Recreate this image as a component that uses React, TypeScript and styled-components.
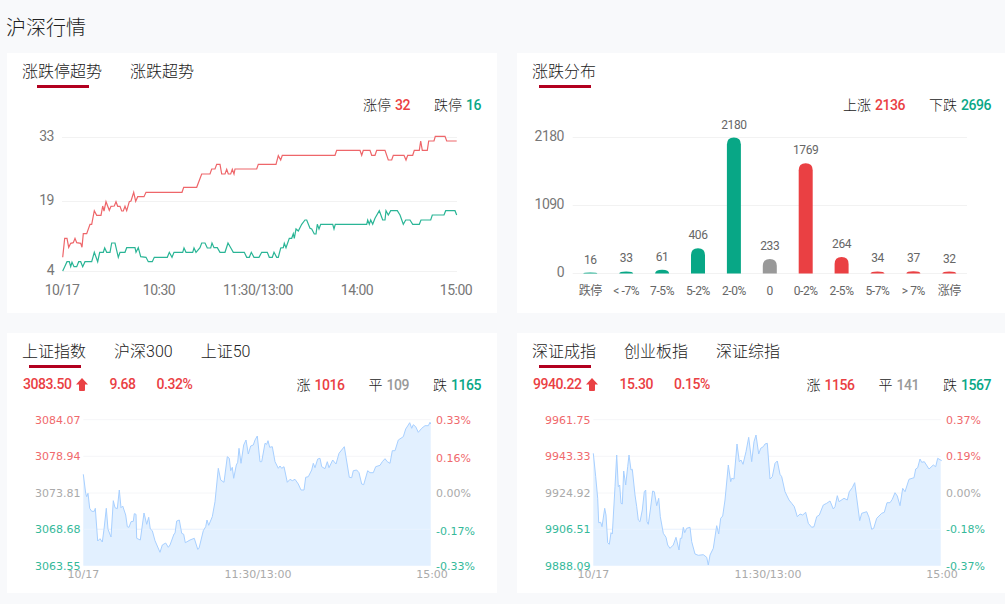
import React from 'react';
import styled, { createGlobalStyle } from 'styled-components';

const RED = '#ea4043';
const GREEN = '#08a786';
const CJK = '"Noto Sans CJK SC", sans-serif';
const NUM = 'Roboto, "Noto Sans CJK SC", sans-serif';

type Tone = 'red' | 'green' | 'grey';
type Pt = number[];

const GlobalStyle = createGlobalStyle`
  html, body {
    margin: 0;
    height: 100%;
    overflow: hidden;
    background: #f8f9fb;
  }
`;

const Page = styled.div`
  width: 1007px;
  height: 604px;
  padding: 0 0 0 7px;
  box-sizing: border-box;
  font-family: ${CJK};
  color: #333;
`;

const Title = styled.h1`
  margin: 0 0 0 -1px;
  height: 53px;
  font-size: 20px;
  font-weight: 300;
  line-height: 54px;
  color: #222;
`;

const Grid = styled.div`
  display: grid;
  grid-template-columns: 490px 490px;
  grid-auto-rows: 260px;
  gap: 20px;
`;

const Card = styled.section`
  background: #fff;
  overflow: hidden;
`;

const Tabs = styled.div`
  display: flex;
  gap: 28px;
  height: 35px;
  padding-left: 15px;
`;

const Tab = styled.div<{ $active?: boolean }>`
  position: relative;
  height: 35px;
  padding-top: 8px;
  box-sizing: border-box;
  font-family: ${NUM};
  font-size: 16px;
  font-weight: 300;
  line-height: 22px;
  color: #222;
  white-space: nowrap;

  &::after {
    content: '';
    display: ${({ $active }) => ($active ? 'block' : 'none')};
    position: absolute;
    left: 50%;
    bottom: 0;
    width: 52px;
    height: 3px;
    margin-left: -25px;
    background: #b2001f;
  }
`;

const InfoRow = styled.div`
  display: flex;
  justify-content: space-between;
  align-items: center;
  height: 18px;
  margin: 7px 0 1px;
  padding: 0 16px 0 16px;
`;

const Group = styled.div<{ $gap: number }>`
  display: flex;
  align-items: center;
  gap: ${({ $gap }) => $gap}px;
`;

const Stat = styled.span`
  font-size: 14px;
  font-weight: 300;
  line-height: 18px;
  color: #222;
  white-space: nowrap;
`;

const toneColor = (t: Tone) => (t === 'red' ? RED : t === 'green' ? GREEN : '#999');

const Num = styled.span<{ $tone: Tone; $inset?: boolean }>`
  margin-left: ${({ $inset }) => ($inset ? '4px' : '0')};
  font-family: ${NUM};
  font-size: 14px;
  font-weight: 500;
  letter-spacing: -0.45px;
  color: ${({ $tone }) => toneColor($tone)};
`;

const PriceWrap = styled.span`
  display: flex;
  align-items: center;
  gap: 5px;
`;

const Chart = styled.svg`
  display: block;
  width: 490px;
  height: 199px;
`;

const AxisText = styled.text`
  font-family: ${NUM};
  font-size: 14px;
  letter-spacing: -0.5px;
  fill: #777;
`;

const BarText = styled.text`
  font-family: ${NUM};
  font-size: 12px;
  letter-spacing: -0.4px;
  fill: #666;
`;

const PriceText = styled.text<{ $tone: string }>`
  font-family: 'DejaVu Sans', sans-serif;
  font-size: 11px;
  fill: ${({ $tone }) => $tone};
`;

const fromZoom = (pts: Pt[], ox: number, oy: number): Pt[] =>
  pts.map(([x, y]) => [ox + x / 3, oy + y / 3]);

const toPath = (pts: Pt[]) => pts.map(p => `${p[0].toFixed(1)},${p[1].toFixed(1)}`).join(' ');

const redLimit = [
  ...fromZoom(
    [[8,397],[14,340],[21,340],[26,367],[32,355],[40,353],[45,340],[50,353],[62,355],[66,367],[70,326],[80,326],[90,298],[95,298],[103,257],[110,271],[123,271],[128,243],[132,258],[138,230],[148,256],[153,244],[163,243],[168,230],[173,244],[180,244],[185,258],[190,258],[195,244],[200,257],[208,230],[213,228],[221,202],[227,229],[233,215],[252,215],[258,202],[366,202],[371,187],[410,187],[425,147],[450,147],[455,132],[465,132],[470,118],[480,118],[485,147],[495,147],[500,133],[505,147],[512,147],[517,133],[522,147],[525,132],[590,132],[595,118]],
    60, 125,
  ),
  ...fromZoom(
    [[0,118],[48,118],[55,92],[62,105],[67,91],[225,91],[230,76],[300,76],[305,91],[310,76],[330,76],[335,91],[345,91],[350,76],[375,76],[385,105],[395,105],[400,91],[432,91],[438,105],[443,91],[458,91],[463,76],[478,76],[482,48],[487,76],[502,76],[506,48],[522,48],[526,34],[555,34],[560,48],[590,48]],
    260, 125,
  ),
];

const greenLimit = [
  ...fromZoom(
    [[8,438],[14,425],[21,410],[28,410],[32,425],[36,412],[42,425],[50,425],[56,410],[62,410],[68,425],[75,410],[95,410],[103,382],[113,410],[119,382],[130,382],[134,369],[140,382],[150,382],[155,354],[165,354],[175,397],[180,382],[195,382],[200,368],[225,368],[228,382],[235,368],[242,395],[258,397],[265,410],[277,410],[283,397],[322,397],[328,382],[336,397],[342,382],[368,382],[372,369],[378,382],[398,382],[402,369],[408,382],[420,368],[425,354],[435,354],[442,369],[452,369],[456,354],[462,368],[472,368],[480,382],[495,382],[504,354],[512,368],[520,382],[553,382],[560,397],[568,397],[574,382],[582,397],[597,397]],
    60, 125,
  ),
  ...fromZoom(
    [[5,382],[22,382],[28,397],[37,397],[42,382],[50,397],[55,397],[62,369],[70,368],[73,355],[78,368],[88,340],[95,340],[100,326],[103,340],[108,312],[115,318],[125,298],[135,285],[140,285],[150,310],[155,312],[163,327],[168,327],[172,298],[177,312],[182,298],[218,298],[222,312],[226,298],[320,298],[323,285],[328,298],[332,285],[338,298],[345,280],[358,257],[368,285],[375,285],[378,257],[385,270],[392,257],[412,257],[420,270],[430,298],[437,285],[450,285],[458,298],[478,298],[483,285],[512,285],[517,270],[552,270],[557,257],[585,257],[590,270]],
    260, 125,
  ),
];

const shanghai = [
  ...fromZoom(
    [[25,193],[32,250],[35,260],[39,250],[44,295],[50,304],[58,304],[61,295],[68,393],[75,386],[82,396],[87,358],[94,295],[99,358],[108,381],[115,272],[120,293],[127,296],[133,240],[138,293],[143,288],[152,315],[157,350],[162,352],[168,335],[175,334],[178,311],[183,313],[185,385],[196,390],[207,309],[215,343],[221,322],[226,357],[232,362],[240,392],[255,427],[262,405],[272,399],[280,412],[285,405],[297,372],[300,370],[305,333],[313,330],[320,370],[326,373],[331,398],[345,390],[358,385],[368,418],[372,415],[385,362],[392,350],[396,330],[401,346],[412,320],[420,275],[430,175],[437,210],[447,217],[457,140],[463,145],[467,182],[472,172],[476,205],[484,165],[488,157],[492,115],[498,160],[506,105],[513,90],[520,132],[527,108],[535,105]],
    75, 410,
  ),
  ...fromZoom(
    [[0,90],[7,78],[15,155],[20,155],[30,100],[35,103],[39,92],[44,112],[52,110],[60,155],[70,175],[75,168],[80,175],[87,170],[97,217],[105,208],[112,212],[120,208],[130,222],[138,240],[147,240],[152,202],[160,200],[170,180],[175,160],[180,173],[188,147],[195,145],[200,170],[210,176],[217,155],[222,173],[233,150],[243,162],[252,130],[268,110],[283,202],[290,203],[295,182],[305,180],[312,188],[320,222],[326,224],[338,182],[345,188],[355,188],[362,170],[375,166],[382,155],[390,146],[397,155],[405,160],[412,122],[420,122],[430,90],[445,80],[452,57],[460,45],[464,38],[470,55],[475,44],[482,50],[490,67],[500,55],[510,47],[520,47],[525,37],[527,42]],
    255, 410,
  ),
];

const shenzhen = [
  ...fromZoom(
    [[25,130],[32,200],[38,265],[41,338],[47,337],[51,350],[59,295],[63,315],[68,398],[73,403],[78,368],[82,372],[90,230],[95,135],[100,230],[104,225],[108,280],[112,282],[116,183],[122,225],[128,170],[132,135],[138,180],[142,178],[150,255],[155,290],[160,330],[165,335],[172,300],[178,245],[182,240],[186,335],[190,343],[196,300],[203,243],[208,245],[215,287],[221,265],[226,320],[235,370],[243,382],[248,405],[255,415],[265,405],[273,382],[282,420],[286,385],[290,385],[295,352],[299,368],[305,355],[315,352],[320,395],[330,432],[340,436],[355,434],[365,442],[370,465],[375,435],[385,415],[395,347],[401,372],[407,325],[413,318],[420,270],[430,165],[437,215],[440,205],[447,207],[456,102],[463,155],[468,150],[474,163],[483,125],[491,82],[500,155],[507,95],[513,75],[521,132],[527,115],[535,110]],
    585, 410,
  ),
  ...fromZoom(
    [[0,102],[7,100],[15,207],[22,200],[30,160],[37,153],[45,193],[50,200],[60,245],[72,270],[80,280],[88,290],[97,320],[105,312],[113,315],[122,307],[130,340],[140,352],[147,350],[155,320],[163,315],[175,285],[185,280],[195,273],[205,297],[210,290],[217,257],[222,275],[237,265],[247,270],[253,245],[262,233],[269,218],[284,332],[290,310],[305,305],[312,322],[320,358],[326,355],[335,325],[350,310],[358,307],[366,278],[375,278],[382,268],[390,248],[397,258],[405,287],[413,235],[420,245],[432,208],[447,203],[452,177],[458,173],[465,147],[470,157],[478,155],[492,177],[505,165],[512,170],[518,145],[530,152]],
    765, 410,
  ),
];

const UpArrow = () => (
  <svg width="12" height="13" viewBox="0 0 12 13" fill={RED}>
    <path d="M6 0 L12 6.5 H9 V12 Q9 13 8 13 H4 Q3 13 3 12 V6.5 H0 Z" />
  </svg>
);

const LimitChart = () => {
  const ticks = [
    { label: '33', y: 137.5 },
    { label: '19', y: 201.5 },
    { label: '4', y: 271.5 },
  ];
  const times = [
    { label: '10/17', x: 62 },
    { label: '10:30', x: 159 },
    { label: '11:30/13:00', x: 258 },
    { label: '14:00', x: 357 },
    { label: '15:00', x: 456 },
  ];
  return (
    <Chart viewBox="7 114 490 199">
      {ticks.map(t => (
        <g key={t.label}>
          <line x1="62" x2="457" y1={t.y} y2={t.y} stroke="#f2f2f2" />
          <AxisText x="54" y={t.y + 3.5} textAnchor="end">
            {t.label}
          </AxisText>
        </g>
      ))}
      {times.map(t => (
        <AxisText key={t.label} x={t.x} y="295" textAnchor="middle">
          {t.label}
        </AxisText>
      ))}
      <polyline points={toPath(redLimit)} fill="none" stroke="#ee666a" strokeWidth="1.2" />
      <polyline points={toPath(greenLimit)} fill="none" stroke="#2ab596" strokeWidth="1.2" />
    </Chart>
  );
};

const bars = [
  { label: '跌停', value: 16, color: GREEN },
  { label: '< -7%', value: 33, color: GREEN },
  { label: '7-5%', value: 61, color: GREEN },
  { label: '5-2%', value: 406, color: GREEN },
  { label: '2-0%', value: 2180, color: GREEN },
  { label: '0', value: 233, color: '#999' },
  { label: '0-2%', value: 1769, color: RED },
  { label: '2-5%', value: 264, color: RED },
  { label: '5-7%', value: 34, color: RED },
  { label: '> 7%', value: 37, color: RED },
  { label: '涨停', value: 32, color: RED },
];

const DistributionChart = () => {
  const base = 273.5;
  return (
    <Chart viewBox="517 114 490 199">
      {[
        { label: '2180', y: 137.5 },
        { label: '1090', y: 205.5 },
        { label: '0', y: base },
      ].map(t => (
        <g key={t.label}>
          <line x1="572.7" x2="967" y1={t.y} y2={t.y} stroke="#f2f2f2" />
          <AxisText x="564" y={t.y + 3.5} textAnchor="end">
            {t.label}
          </AxisText>
        </g>
      ))}
      {bars.map((b, i) => {
        const cx = 590.3 + i * 35.9;
        const h = Math.max(1, (b.value / 2180) * 136);
        const r = Math.min(7, h);
        const top = base - h;
        return (
          <g key={b.label}>
            <path
              d={`M${cx - 7} ${base} V${top + r} Q${cx - 7} ${top} ${cx} ${top} Q${cx + 7} ${top} ${cx + 7} ${top + r} V${base} Z`}
              fill={b.color}
            />
            <BarText x={cx} y={top - 9} textAnchor="middle">
              {b.value}
            </BarText>
            <BarText x={cx} y="295" textAnchor="middle">
              {b.label}
            </BarText>
          </g>
        );
      })}
    </Chart>
  );
};

const PRICE_TONES = ['#f0696c', '#f0696c', '#aaa', '#35b99a', '#35b99a'];
const GRID_Y = [419.7, 456.3, 493, 529.3, 565.8];

interface IndexChartProps {
  left: number;
  line: Pt[];
  prices: string[];
  percents: string[];
  percentY: number[];
}

const IndexChart = ({ left, line, prices, percents, percentY }: IndexChartProps) => {
  const x0 = left + 76.3;
  const x1 = left + 423.7;
  const bottom = 565.8;
  const area = [[x0, bottom], ...line, [x1, line[line.length - 1][1]], [x1, bottom]];
  return (
    <Chart viewBox={`${left} 394 490 199`}>
      {GRID_Y.slice(0, 4).map(y => (
        <line key={y} x1={x0} x2={x1} y1={y} y2={y} stroke="#f5f6f8" />
      ))}
      <polygon points={toPath(area)} fill="#e2f0ff" />
      <line x1={x0} x2={x1} y1={GRID_Y[3]} y2={GRID_Y[3]} stroke="#eaf3ff" />
      <polyline points={toPath(line)} fill="none" stroke="#a8d0ff" strokeWidth="1" />
      {prices.map((p, i) => (
        <PriceText key={p} x={left + 73.5} y={GRID_Y[i] + 4} textAnchor="end" $tone={PRICE_TONES[i]}>
          {p}
        </PriceText>
      ))}
      {percents.map((p, i) => (
        <PriceText key={p} x={left + 429} y={percentY[i] + 4} $tone={PRICE_TONES[i]}>
          {p}
        </PriceText>
      ))}
      <PriceText x={x0} y="578" textAnchor="middle" $tone="#aaa">
        10/17
      </PriceText>
      <PriceText x={left + 251} y="578" textAnchor="middle" $tone="#aaa">
        11:30/13:00
      </PriceText>
      <PriceText x={left + 425} y="578" textAnchor="middle" $tone="#aaa">
        15:00
      </PriceText>
    </Chart>
  );
};

interface IndexCardProps extends IndexChartProps {
  tabs: string[];
  price: string;
  change: string;
  rate: string;
  up: string;
  flat: string;
  down: string;
}

const IndexCard = ({ tabs, price, change, rate, up, flat, down, ...chart }: IndexCardProps) => (
  <Card>
    <Tabs>
      {tabs.map((t, i) => (
        <Tab key={t} $active={i === 0}>
          {t}
        </Tab>
      ))}
    </Tabs>
    <InfoRow>
      <Group $gap={21}>
        <PriceWrap>
          <Num $tone="red">{price}</Num>
          <UpArrow />
        </PriceWrap>
        <Num $tone="red">{change}</Num>
        <Num $tone="red">{rate}</Num>
      </Group>
      <Group $gap={24}>
        <Stat>
          涨<Num $tone="red" $inset>{up}</Num>
        </Stat>
        <Stat>
          平<Num $tone="grey" $inset>{flat}</Num>
        </Stat>
        <Stat>
          跌<Num $tone="green" $inset>{down}</Num>
        </Stat>
      </Group>
    </InfoRow>
    <IndexChart {...chart} />
  </Card>
);

const App = () => (
  <Page>
    <GlobalStyle />
    <Title>沪深行情</Title>
    <Grid>
      <Card>
        <Tabs>
          <Tab $active>涨跌停超势</Tab>
          <Tab>涨跌超势</Tab>
        </Tabs>
        <InfoRow>
          <span />
          <Group $gap={24}>
            <Stat>
              涨停<Num $tone="red" $inset>32</Num>
            </Stat>
            <Stat>
              跌停<Num $tone="green" $inset>16</Num>
            </Stat>
          </Group>
        </InfoRow>
        <LimitChart />
      </Card>
      <Card>
        <Tabs>
          <Tab $active>涨跌分布</Tab>
        </Tabs>
        <InfoRow>
          <span />
          <Group $gap={24}>
            <Stat>
              上涨<Num $tone="red" $inset>2136</Num>
            </Stat>
            <Stat>
              下跌<Num $tone="green" $inset>2696</Num>
            </Stat>
          </Group>
        </InfoRow>
        <DistributionChart />
      </Card>
      <IndexCard
        tabs={['上证指数', '沪深300', '上证50']}
        price="3083.50"
        change="9.68"
        rate="0.32%"
        up="1016"
        flat="109"
        down="1165"
        left={7}
        line={shanghai}
        prices={['3084.07', '3078.94', '3073.81', '3068.68', '3063.55']}
        percents={['0.33%', '0.16%', '0.00%', '-0.17%', '-0.33%']}
        percentY={[420, 458, 493, 531, 566]}
      />
      <IndexCard
        tabs={['深证成指', '创业板指', '深证综指']}
        price="9940.22"
        change="15.30"
        rate="0.15%"
        up="1156"
        flat="141"
        down="1567"
        left={517}
        line={shenzhen}
        prices={['9961.75', '9943.33', '9924.92', '9906.51', '9888.09']}
        percents={['0.37%', '0.19%', '0.00%', '-0.18%', '-0.37%']}
        percentY={[420, 456, 493, 529, 566]}
      />
    </Grid>
  </Page>
);

export default App;
